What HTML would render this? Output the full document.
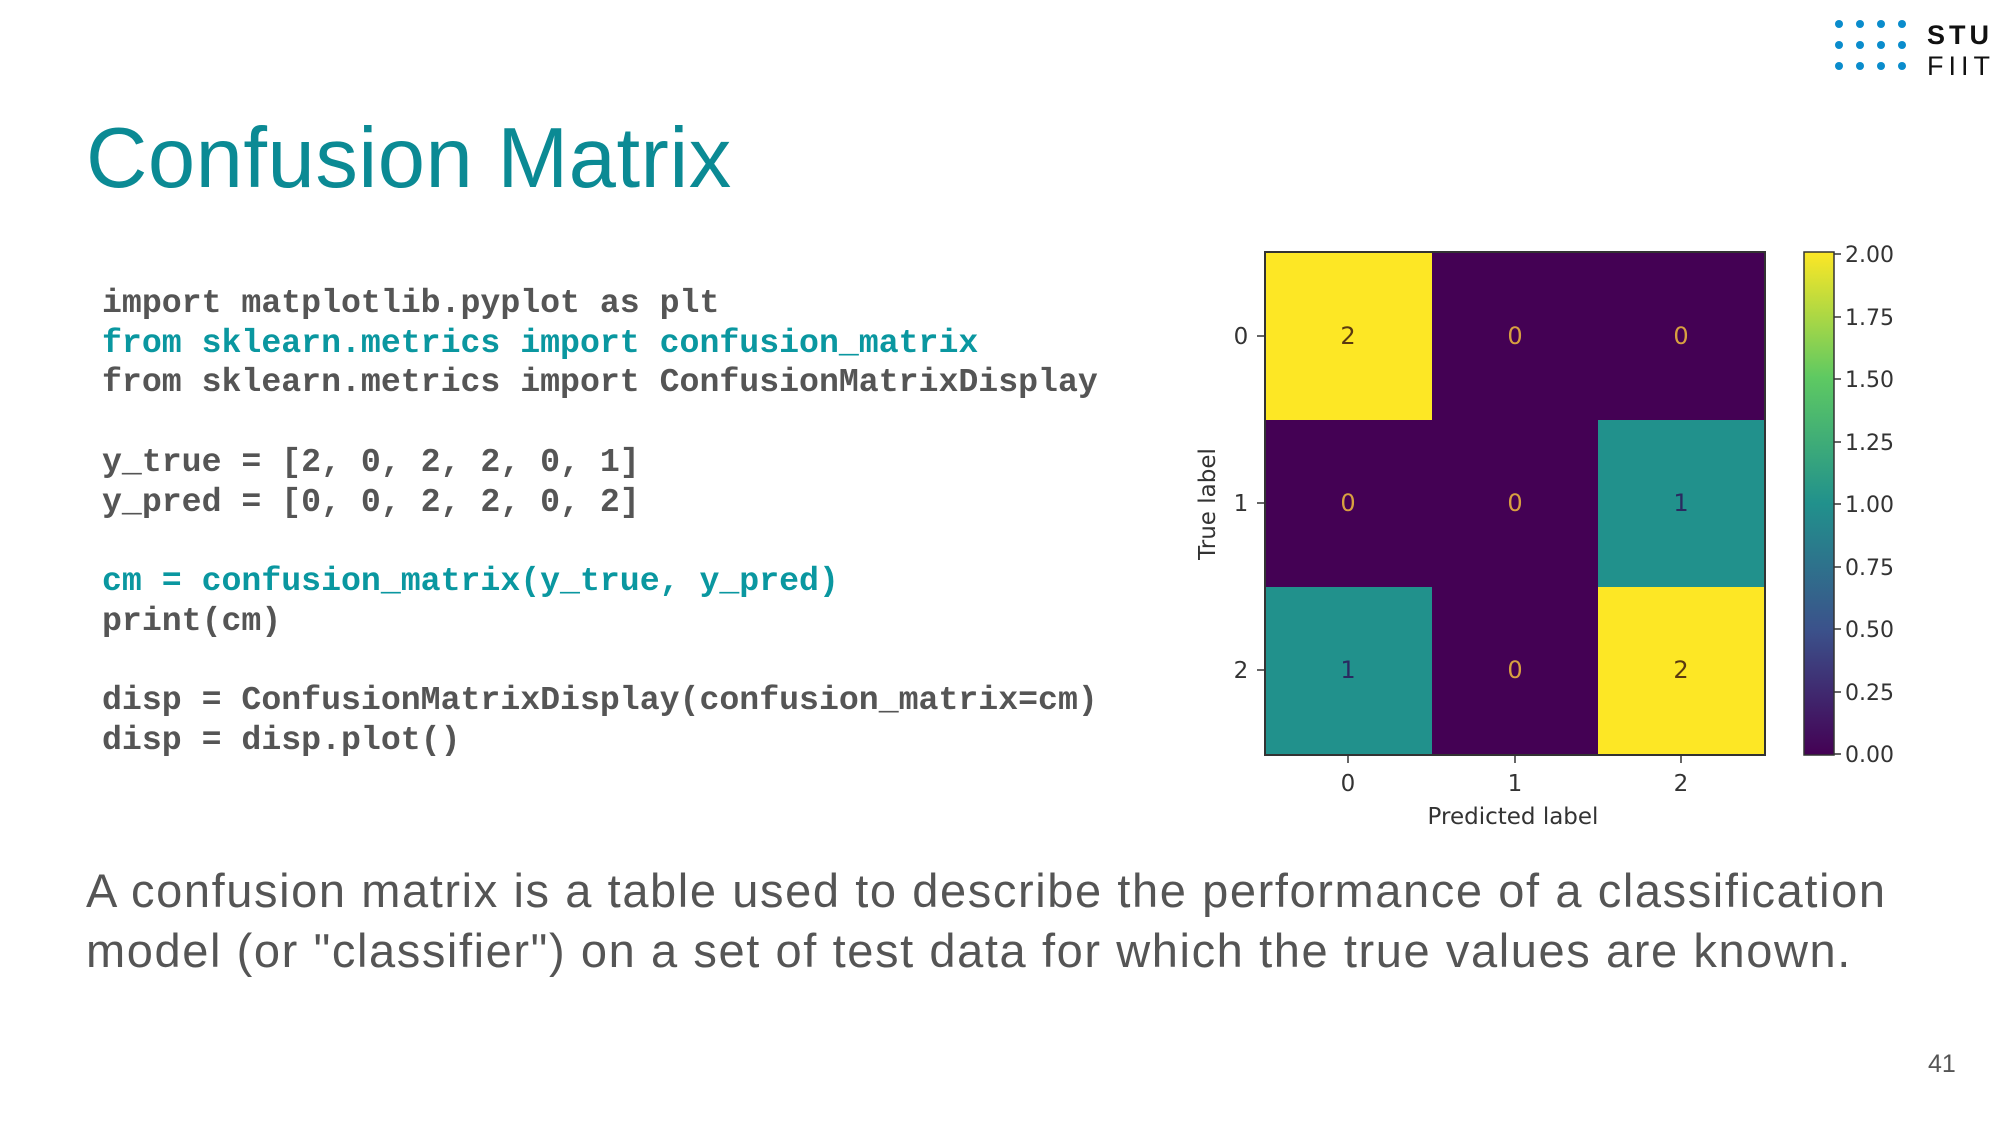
<!DOCTYPE html>
<html><head><meta charset="utf-8"><style>
body{margin:0;width:2000px;height:1125px;background:#fff;position:relative;overflow:hidden;font-family:"Liberation Sans",sans-serif}
.t{position:absolute;left:86px;top:110px;font-size:85px;color:#0b8a94;letter-spacing:0.5px}
pre{position:absolute;left:102px;top:284px;margin:0;font-family:"Liberation Mono",monospace;font-weight:bold;font-size:33.2px;line-height:39.7px;color:#555}
.c{color:#0a97a0}
.p{position:absolute;left:86px;top:861px;font-size:47px;line-height:60px;color:#555;width:1900px;letter-spacing:1.6px;white-space:nowrap}
.n{position:absolute;left:1928px;top:1050px;font-size:25px;color:#555}
</style></head><body>
<svg style="position:absolute;left:1825px;top:10px" width="175" height="70">
<g fill="#0a8ccc">
<circle cx="14" cy="14" r="4"/><circle cx="35" cy="14" r="4"/><circle cx="56" cy="14" r="4"/><circle cx="77" cy="14" r="4"/>
<circle cx="14" cy="35" r="4"/><circle cx="35" cy="35" r="4"/><circle cx="56" cy="35" r="4"/><circle cx="77" cy="35" r="4"/>
<circle cx="14" cy="56" r="4"/><circle cx="35" cy="56" r="4"/><circle cx="56" cy="56" r="4"/><circle cx="77" cy="56" r="4"/>
</g>
<text x="102" y="34" font-family="Liberation Sans" font-weight="bold" font-size="27" letter-spacing="4" fill="#111">STU</text>
<text x="102" y="65" font-family="Liberation Sans" font-size="27" letter-spacing="5" fill="#111">FIIT</text>
</svg>
<div class="t">Confusion Matrix</div>
<pre>import matplotlib.pyplot as plt
<span class="c">from sklearn.metrics import confusion_matrix</span>
from sklearn.metrics import ConfusionMatrixDisplay

y_true = [2, 0, 2, 2, 0, 1]
y_pred = [0, 0, 2, 2, 0, 2]

<span class="c">cm = confusion_matrix(y_true, y_pred)</span>
print(cm)

disp = ConfusionMatrixDisplay(confusion_matrix=cm)
disp = disp.plot()</pre>
<svg style="position:absolute;left:-5px;top:-1px" width="2000" height="1125" font-family="DejaVu Sans, sans-serif">
<defs><linearGradient id="v" x1="0" y1="1" x2="0" y2="0">
<stop offset="0" stop-color="#440154"/><stop offset=".25" stop-color="#3b528b"/><stop offset=".5" stop-color="#21918c"/><stop offset=".75" stop-color="#5ec962"/><stop offset="1" stop-color="#fde725"/></linearGradient></defs>
<rect x="1270" y="253" width="500" height="503" fill="#440154"/>
<rect x="1270" y="253" width="167" height="168" fill="#fde725"/>
<rect x="1603" y="421" width="167" height="167" fill="#21918c"/>
<rect x="1270" y="588" width="167" height="168" fill="#21918c"/>
<rect x="1603" y="588" width="167" height="168" fill="#fde725"/>
<rect x="1270" y="253" width="500" height="503" fill="none" stroke="#333" stroke-width="2"/>
<g font-size="24" text-anchor="middle">
<text x="1353" y="345" fill="#5a3a10">2</text><text x="1520" y="345" fill="#d8a040">0</text><text x="1686" y="345" fill="#d8a040">0</text>
<text x="1353" y="512" fill="#d8a040">0</text><text x="1520" y="512" fill="#d8a040">0</text><text x="1686" y="512" fill="#2a2a60">1</text>
<text x="1353" y="679" fill="#2a2a60">1</text><text x="1520" y="679" fill="#d8a040">0</text><text x="1686" y="679" fill="#5a3a10">2</text>
</g>
<g fill="#333" font-size="23">
<text x="1246" y="345" text-anchor="middle">0</text><text x="1246" y="512" text-anchor="middle">1</text><text x="1246" y="679" text-anchor="middle">2</text>
<text x="1353" y="792" text-anchor="middle">0</text><text x="1520" y="792" text-anchor="middle">1</text><text x="1686" y="792" text-anchor="middle">2</text>
<text x="1518" y="825" text-anchor="middle">Predicted label</text>
<text transform="translate(1220,505) rotate(-90)" text-anchor="middle">True label</text>
</g>
<g stroke="#333" stroke-width="1.5">
<line x1="1262" y1="337" x2="1270" y2="337"/><line x1="1262" y1="504" x2="1270" y2="504"/><line x1="1262" y1="671" x2="1270" y2="671"/>
<line x1="1353" y1="756" x2="1353" y2="764"/><line x1="1520" y1="756" x2="1520" y2="764"/><line x1="1686" y1="756" x2="1686" y2="764"/>
</g>
<rect x="1809" y="253" width="30" height="503" fill="url(#v)" stroke="#333" stroke-width="1.5"/>
<g fill="#333" font-size="22" stroke="#333" stroke-width="1.5">
<line x1="1839" y1="255" x2="1846" y2="255"/><text x="1850" y="263" stroke="none">2.00</text>
<line x1="1839" y1="318" x2="1846" y2="318"/><text x="1850" y="326" stroke="none">1.75</text>
<line x1="1839" y1="380" x2="1846" y2="380"/><text x="1850" y="388" stroke="none">1.50</text>
<line x1="1839" y1="443" x2="1846" y2="443"/><text x="1850" y="451" stroke="none">1.25</text>
<line x1="1839" y1="505" x2="1846" y2="505"/><text x="1850" y="513" stroke="none">1.00</text>
<line x1="1839" y1="568" x2="1846" y2="568"/><text x="1850" y="576" stroke="none">0.75</text>
<line x1="1839" y1="630" x2="1846" y2="630"/><text x="1850" y="638" stroke="none">0.50</text>
<line x1="1839" y1="693" x2="1846" y2="693"/><text x="1850" y="701" stroke="none">0.25</text>
<line x1="1839" y1="755" x2="1846" y2="755"/><text x="1850" y="763" stroke="none">0.00</text>
</g>
</svg>
<div class="p">A confusion matrix is a table used to describe the performance of a classification<br>model (or "classifier") on a set of test data for which the true values are known.</div>
<div class="n">41</div>
</body></html>
